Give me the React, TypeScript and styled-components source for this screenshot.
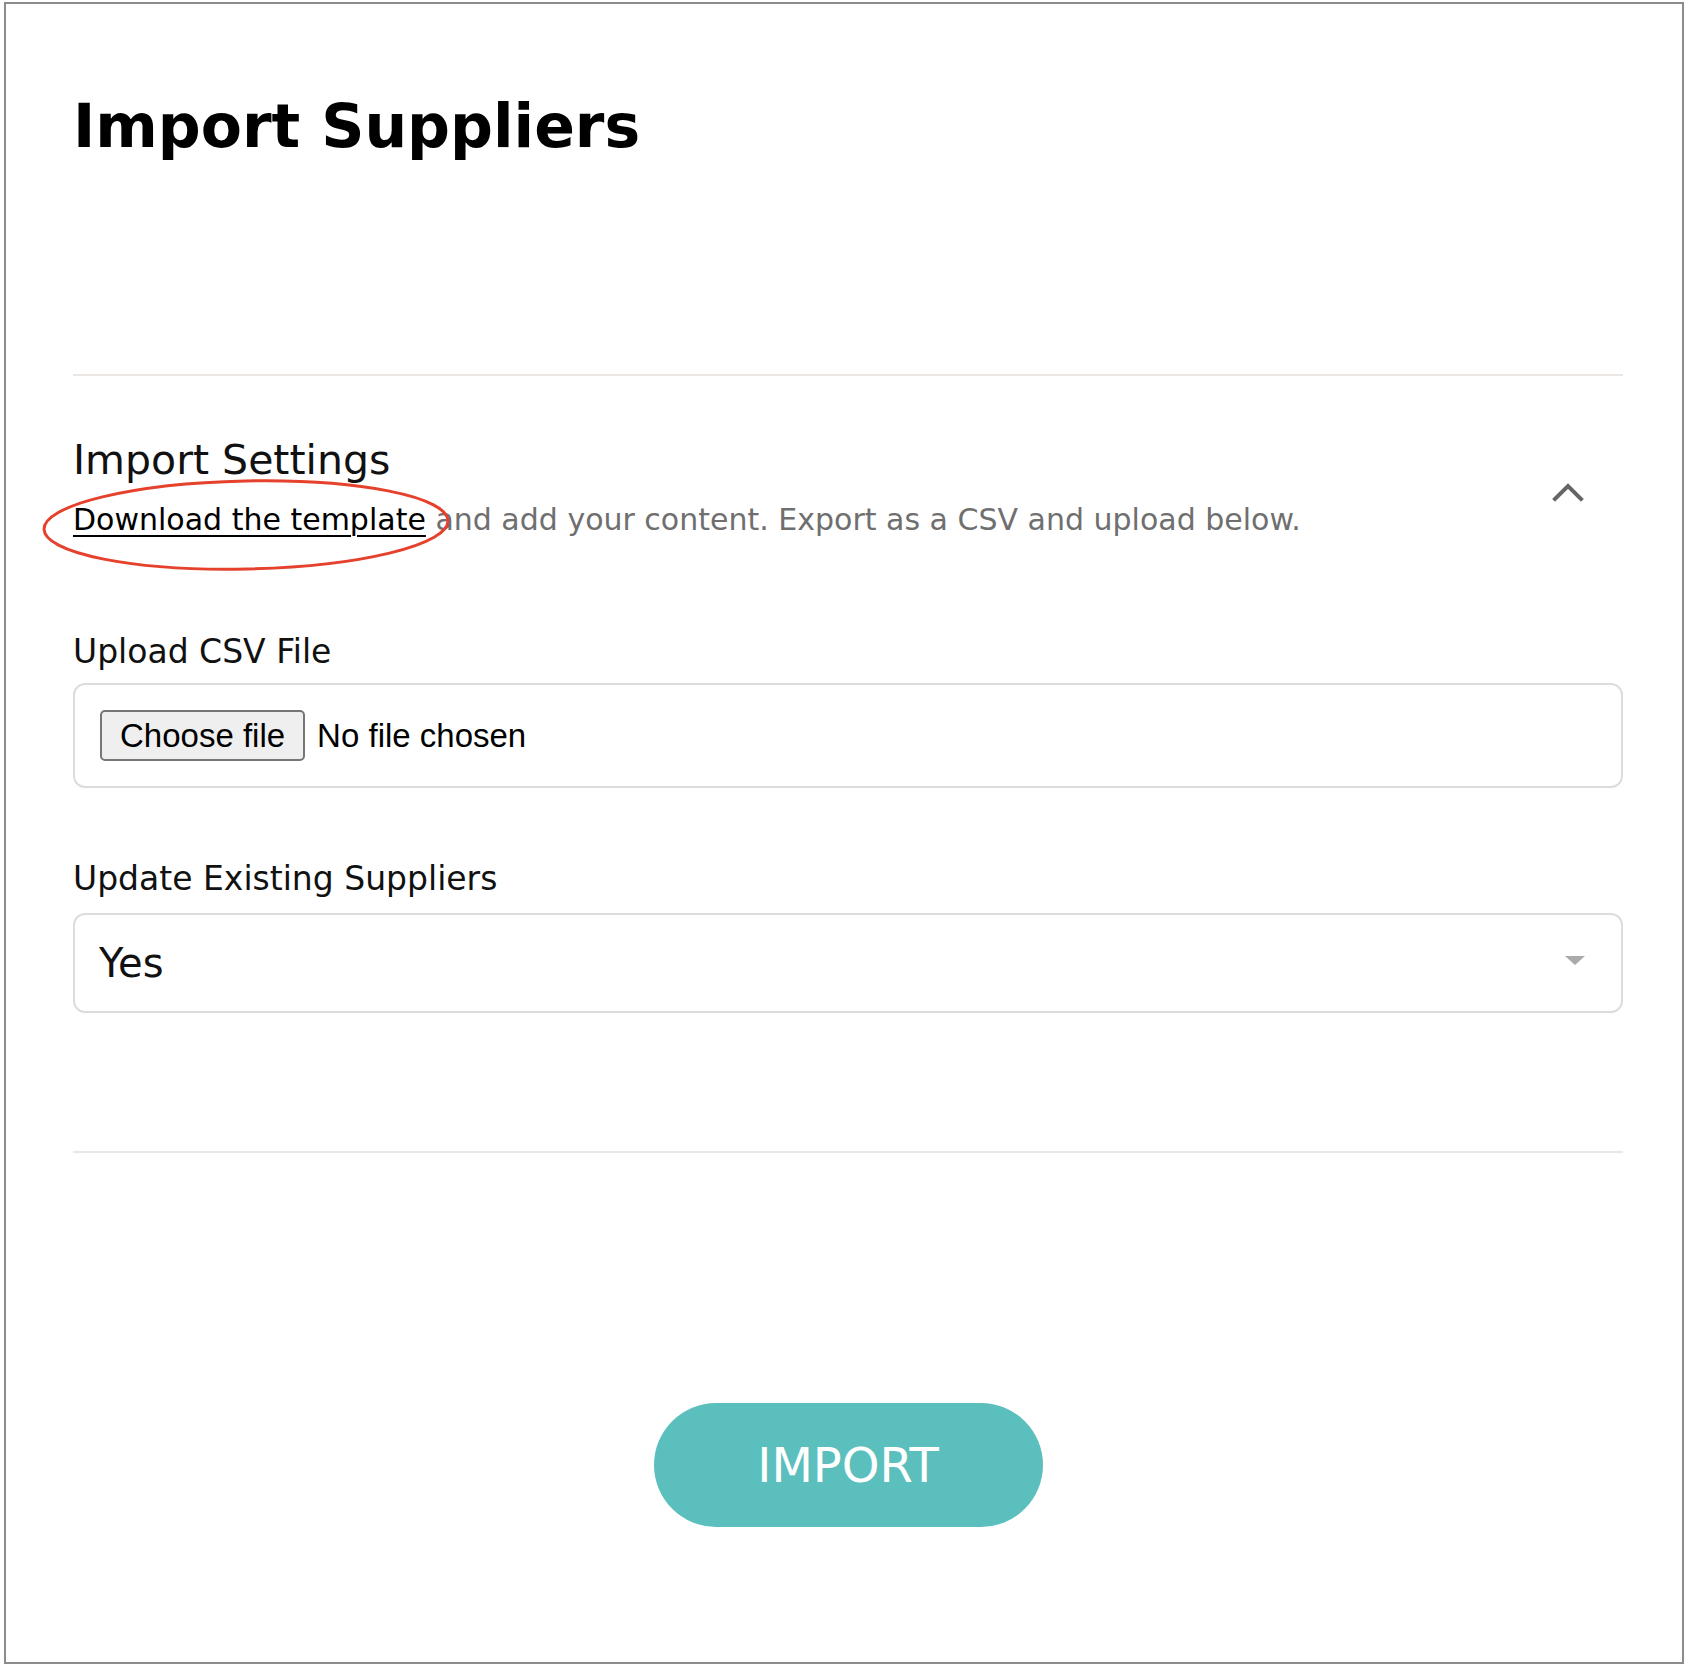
import { useState } from "react";
import styled, { createGlobalStyle } from "styled-components";

const GlobalStyle = createGlobalStyle`
  html, body {
    margin: 0;
    padding: 0;
    background: #fff;
  }
  body {
    font-family: "DejaVu Sans", "Noto Sans", sans-serif;
    color: #111;
  }
  * {
    box-sizing: border-box;
  }
`;

const ChevronUp = () => (
  <svg width="32" height="20" viewBox="0 0 32 20" fill="none">
    <path
      d="M3 17 L16 4 L29 17"
      stroke="#666"
      strokeWidth="4"
      strokeLinecap="square"
    />
  </svg>
);

const Highlight = () => (
  <StHighlight width="412" height="98" viewBox="0 0 412 98">
    <ellipse
      cx="206"
      cy="49"
      rx="202"
      ry="44"
      fill="none"
      stroke="#e5412d"
      strokeWidth="3"
      transform="rotate(-1.2 206 49)"
    />
  </StHighlight>
);

const App = () => {
  const [fileName, setFileName] = useState("");

  return (
    <>
      <GlobalStyle />
      <StFrame>
        <StTitle>Import Suppliers</StTitle>
        <StDivider $top={218} />

        <StSettings>
          <StSettingsText>
            <StSettingsTitle>Import Settings</StSettingsTitle>
            <StDescription>
              <StLink href="#">Download the template</StLink> and add your
              content. Export as a CSV and upload below.
              <Highlight />
            </StDescription>
          </StSettingsText>
          <StToggle type="button" aria-label="Collapse">
            <ChevronUp />
          </StToggle>
        </StSettings>

        <StField $top={90}>
          <StLabel htmlFor="csv">Upload CSV File</StLabel>
          <StFileBox>
            <StHiddenInput
              id="csv"
              type="file"
              accept=".csv"
              onChange={(e) => setFileName(e.target.files?.[0]?.name ?? "")}
            />
            <StChooseButton htmlFor="csv">Choose file</StChooseButton>
            <StFileName>{fileName || "No file chosen"}</StFileName>
          </StFileBox>
        </StField>

        <StField $top={71}>
          <StLabel htmlFor="update">Update Existing Suppliers</StLabel>
          <StSelectWrap>
            <StSelect id="update" defaultValue="yes">
              <option value="yes">Yes</option>
              <option value="no">No</option>
            </StSelect>
            <StCaret />
          </StSelectWrap>
        </StField>

        <StDivider $top={138} />

        <StActions>
          <StImportButton type="button">IMPORT</StImportButton>
        </StActions>
      </StFrame>
    </>
  );
};

export default App;

const StFrame = styled.div`
  display: flex;
  flex-direction: column;
  width: 1680px;
  height: 1662px;
  margin: 2px 0 0 4px;
  padding: 92px 59px 0 67px;

  border: 2px solid #8c8c8c;
  background-color: #fff;
`;

const StTitle = styled.h1`
  margin: 0;
  font-size: 60px;
  line-height: 60px;
  font-weight: 700;
  color: #000;
`;

const StDivider = styled.hr<{ $top: number }>`
  width: 100%;
  height: 2px;
  margin: ${({ $top }) => $top}px 0 0;
  border: none;
  background-color: #ece7e3;
`;

const StSettings = styled.section`
  display: flex;
  align-items: center;
  justify-content: space-between;
  margin-top: 60px;
`;

const StSettingsText = styled.div`
  display: flex;
  flex-direction: column;
  gap: 12px;
`;

const StSettingsTitle = styled.h2`
  margin: 0;
  font-size: 41px;
  line-height: 49px;
  font-weight: 400;
  color: #111;
`;

const StDescription = styled.p`
  position: relative;
  margin: 0;
  font-size: 30px;
  line-height: 45px;
  color: #6f6f6f;
`;

const StLink = styled.a`
  color: #000;
  text-decoration: underline;
  text-decoration-thickness: 2px;
  text-underline-offset: 5px;
`;

const StHighlight = styled.svg`
  position: absolute;
  left: -33px;
  top: -21px;
  pointer-events: none;
`;

const StToggle = styled.button`
  display: flex;
  align-items: center;
  justify-content: center;
  margin: 6px 39px 0 0;
  padding: 0;
  border: none;
  background: none;
  cursor: pointer;
`;

const StField = styled.div<{ $top: number }>`
  display: flex;
  flex-direction: column;
  margin-top: ${({ $top }) => $top}px;
`;

const StLabel = styled.label`
  font-size: 33px;
  line-height: 40px;
  color: #111;
`;

const StFileBox = styled.div`
  display: flex;
  align-items: center;
  gap: 12px;
  height: 105px;
  margin-top: 11px;
  padding: 0 25px;

  border: 2px solid #dcdcdc;
  border-radius: 12px;
`;

const StHiddenInput = styled.input`
  display: none;
`;

const StChooseButton = styled.label`
  display: flex;
  align-items: center;
  height: 51px;
  padding: 0 18px;

  font-family: "Liberation Sans", Arial, sans-serif;
  font-size: 33px;
  color: #000;
  background-color: #efefef;
  border: 2px solid #767676;
  border-radius: 5px;
  cursor: pointer;
`;

const StFileName = styled.span`
  font-family: "Liberation Sans", Arial, sans-serif;
  font-size: 33px;
  color: #000;
`;

const StSelectWrap = styled.div`
  position: relative;
  margin-top: 14px;
`;

const StSelect = styled.select`
  width: 100%;
  height: 100px;
  padding: 0 80px 0 24px;
  appearance: none;

  font-family: "DejaVu Sans", sans-serif;
  font-size: 40px;
  color: #111;
  background-color: #fff;
  border: 2px solid #dcdcdc;
  border-radius: 12px;
  outline: none;
`;

const StCaret = styled.span`
  position: absolute;
  right: 38px;
  top: 43px;
  width: 0;
  height: 0;
  border-left: 10px solid transparent;
  border-right: 10px solid transparent;
  border-top: 9px solid #aaa;
  pointer-events: none;
`;

const StActions = styled.div`
  display: flex;
  justify-content: center;
  margin-top: 250px;
`;

const StImportButton = styled.button`
  width: 389px;
  height: 124px;
  border: none;
  border-radius: 62px;

  font-family: "DejaVu Sans", sans-serif;
  font-size: 48px;
  color: #fff;
  background-color: #5bbfbd;
  cursor: pointer;
`;
